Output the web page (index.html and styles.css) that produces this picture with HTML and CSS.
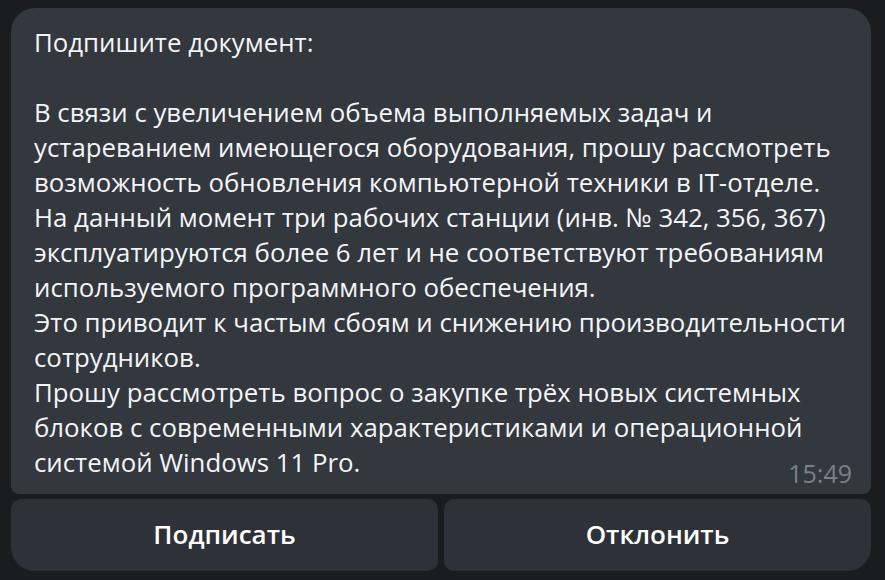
FILE: index.html
```html
<!DOCTYPE html>
<html lang="ru">
<head>
<meta charset="utf-8">
<link rel="stylesheet" href="styles.css">
</head>
<body>
<div class="wrap">
  <div class="bubble">
    <div class="text">Подпишите документ:<br><br>В связи с увеличением объема выполняемых задач и устареванием имеющегося оборудования, прошу рассмотреть возможность обновления компьютерной техники в IT-отделе.<br>На данный момент три рабочих станции (инв. № 342, 356, 367) эксплуатируются более 6 лет и не соответствуют требованиям используемого программного обеспечения.<br>Это приводит к частым сбоям и снижению производительности сотрудников.<br>Прошу рассмотреть вопрос о закупке трёх новых системных блоков с современными характеристиками и операционной системой Windows 11 Pro.</div>
    <span class="time">15:49</span>
  </div>
  <div class="buttons">
    <div class="btn btn-left">Подписать</div>
    <div class="btn btn-right">Отклонить</div>
  </div>
</div>
</body>
</html>
```
FILE: styles.css
```css
html, body {
  margin: 0;
  padding: 0;
  background: #1b1c20;
  width: 885px;
  height: 580px;
  overflow: hidden;
}
.wrap {
  padding: 8px 14px 0 11px;
  display: flex;
  flex-direction: column;
  gap: 5px;
}
.bubble {
  position: relative;
  background: #33373e;
  border-radius: 24px 24px 8px 8px;
  padding: 17px 18px 11px 23px;
  height: 458px;
}
.text {
  font-family: "Open Sans", sans-serif;
  font-size: 25.8px;
  line-height: 35px;
  color: #f4f5f6;
}
.time {
  position: absolute;
  right: 19px;
  bottom: 4px;
  font-family: "Open Sans", sans-serif;
  font-size: 25px;
  color: #7b8087;
}
.buttons {
  display: flex;
  gap: 6px;
}
.btn {
  flex: 1;
  height: 72px;
  padding-bottom: 3px;
  box-sizing: border-box;
  background: #2e3137;
  display: flex;
  align-items: center;
  justify-content: center;
  font-family: "Open Sans", sans-serif;
  font-weight: 600;
  font-size: 26px;
  color: #ffffff;
}
.btn-left {
  border-radius: 10px 10px 10px 24px;
}
.btn-right {
  border-radius: 10px 10px 24px 10px;
}
```
